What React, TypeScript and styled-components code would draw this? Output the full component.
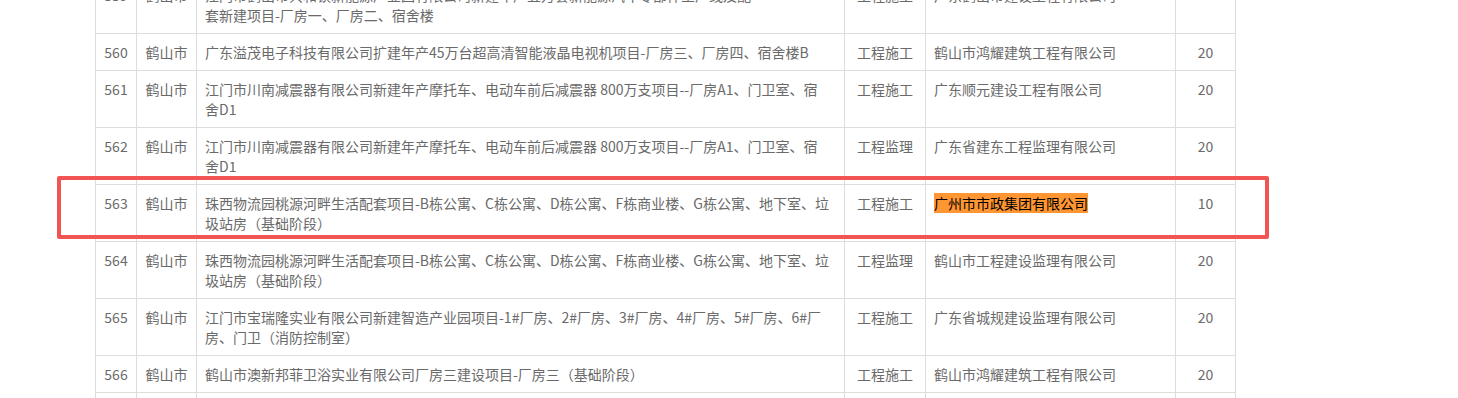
import React from "react";
import styled, { createGlobalStyle } from "styled-components";

const GlobalStyle = createGlobalStyle`
  html, body {
    margin: 0;
    padding: 0;
    background: #ffffff;
  }
  body {
    font-family: "Noto Sans CJK SC", "Noto Sans", sans-serif;
  }
`;

const Page = styled.div`
  position: relative;
  margin-top: -24px;
  padding-left: 95px;
  width: 1458px;
  box-sizing: border-box;
`;

const Table = styled.table`
  border-collapse: collapse;
  table-layout: fixed;
  width: 1140px;
  font-size: 14px;
  line-height: 20px;
  color: #6a6a6a;
`;

const Col = styled.col<{ $w: number }>`
  width: ${(p) => p.$w}px;
`;

const Cell = styled.td<{ $align?: "left" | "center" }>`
  border: 1px solid #dddddd;
  padding: 8px 8px;
  vertical-align: top;
  text-align: ${(p) => p.$align ?? "center"};
  white-space: nowrap;
  overflow: hidden;
`;

const Mark = styled.mark`
  background: #ff9632;
  color: #000000;
  padding: 0;
`;

const Annotation = styled.div`
  position: absolute;
  left: 57px;
  top: 200px;
  width: 1212px;
  height: 63px;
  box-sizing: border-box;
  border: 4px solid #f25454;
  border-radius: 2px;
  pointer-events: none;
`;

type Row = {
  no: string;
  city: string;
  lines: string[];
  kind: string;
  company: string;
  score: string;
  highlight?: boolean;
};

const widths = [41, 60, 648, 81, 250, 60];

const rows: Row[] = [
  {
    no: "559",
    city: "鹤山市",
    lines: [
      "江门市鹤山市共和镇新能源产业园有限公司新建年产五万套新能源汽车零部件生产线及配",
      "套新建项目-厂房一、厂房二、宿舍楼",
    ],
    kind: "工程施工",
    company: "广东鹤山市建设工程有限公司",
    score: "",
  },
  {
    no: "560",
    city: "鹤山市",
    lines: ["广东溢茂电子科技有限公司扩建年产45万台超高清智能液晶电视机项目-厂房三、厂房四、宿舍楼B"],
    kind: "工程施工",
    company: "鹤山市鸿耀建筑工程有限公司",
    score: "20",
  },
  {
    no: "561",
    city: "鹤山市",
    lines: ["江门市川南减震器有限公司新建年产摩托车、电动车前后减震器 800万支项目--厂房A1、门卫室、宿", "舍D1"],
    kind: "工程施工",
    company: "广东顺元建设工程有限公司",
    score: "20",
  },
  {
    no: "562",
    city: "鹤山市",
    lines: ["江门市川南减震器有限公司新建年产摩托车、电动车前后减震器 800万支项目--厂房A1、门卫室、宿", "舍D1"],
    kind: "工程监理",
    company: "广东省建东工程监理有限公司",
    score: "20",
  },
  {
    no: "563",
    city: "鹤山市",
    lines: ["珠西物流园桃源河畔生活配套项目-B栋公寓、C栋公寓、D栋公寓、F栋商业楼、G栋公寓、地下室、垃", "圾站房（基础阶段）"],
    kind: "工程施工",
    company: "广州市市政集团有限公司",
    score: "10",
    highlight: true,
  },
  {
    no: "564",
    city: "鹤山市",
    lines: ["珠西物流园桃源河畔生活配套项目-B栋公寓、C栋公寓、D栋公寓、F栋商业楼、G栋公寓、地下室、垃", "圾站房（基础阶段）"],
    kind: "工程监理",
    company: "鹤山市工程建设监理有限公司",
    score: "20",
  },
  {
    no: "565",
    city: "鹤山市",
    lines: ["江门市宝瑞隆实业有限公司新建智造产业园项目-1#厂房、2#厂房、3#厂房、4#厂房、5#厂房、6#厂", "房、门卫（消防控制室）"],
    kind: "工程施工",
    company: "广东省城规建设监理有限公司",
    score: "20",
  },
  {
    no: "566",
    city: "鹤山市",
    lines: ["鹤山市澳新邦菲卫浴实业有限公司厂房三建设项目-厂房三（基础阶段）"],
    kind: "工程施工",
    company: "鹤山市鸿耀建筑工程有限公司",
    score: "20",
  },
  {
    no: "567",
    city: "鹤山市",
    lines: ["鹤山市澳新邦菲卫浴实业有限公司厂房三建设项目-厂房三（基础阶段）"],
    kind: "工程监理",
    company: "广东省建东工程监理有限公司",
    score: "20",
  },
];

export default function App() {
  return (
    <>
      <GlobalStyle />
      <Page>
        <Table>
          <colgroup>
            {widths.map((w, i) => (
              <Col key={i} $w={w} />
            ))}
          </colgroup>
          <tbody>
            {rows.map((r) => (
              <tr key={r.no}>
                <Cell>{r.no}</Cell>
                <Cell>{r.city}</Cell>
                <Cell $align="left">
                  {r.lines.map((l, i) => (
                    <React.Fragment key={i}>
                      {i > 0 && <br />}
                      {l}
                    </React.Fragment>
                  ))}
                </Cell>
                <Cell>{r.kind}</Cell>
                <Cell $align="left">{r.highlight ? <Mark>{r.company}</Mark> : r.company}</Cell>
                <Cell>{r.score}</Cell>
              </tr>
            ))}
          </tbody>
        </Table>
        <Annotation />
      </Page>
    </>
  );
}
